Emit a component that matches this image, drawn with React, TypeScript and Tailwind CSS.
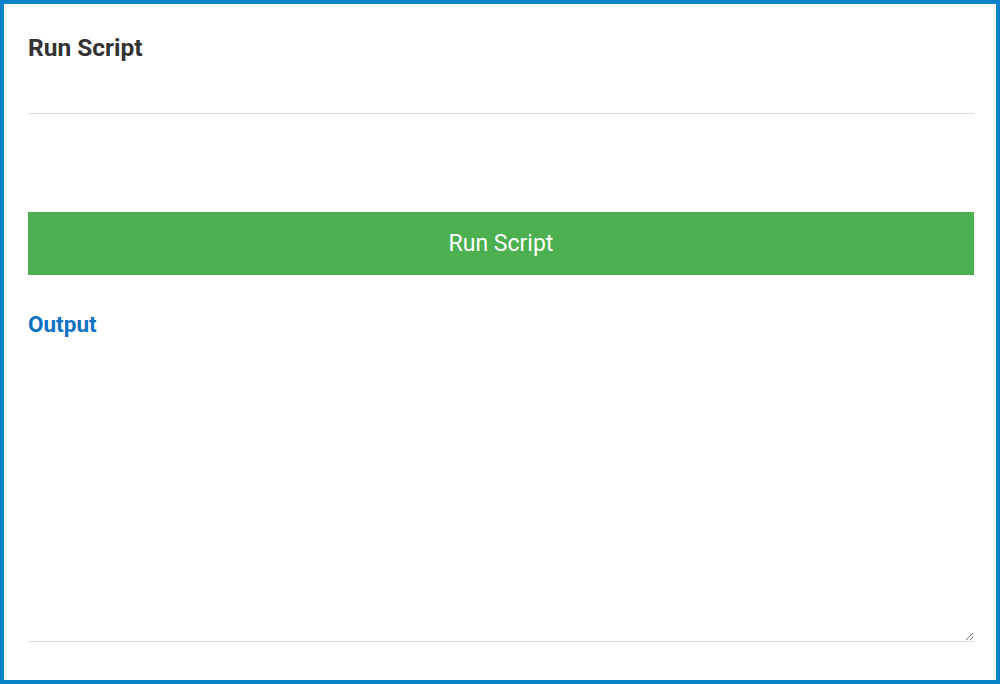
export default function App() {
  return (
    <div className="h-[684px] w-[1000px] border-4 border-[#0784c9] bg-white pl-6 pr-[22px] font-['Roboto',sans-serif]">
      {/* Header */}
      <div className="border-b border-[#dddddd] pt-[30px] pb-[51px]">
        <h1 className="text-[24.5px] leading-7 font-bold text-[#333333]">Run Script</h1>
      </div>

      {/* Run button */}
      <button className="mt-[98px] h-[63px] w-full bg-[#4caf50] pt-[2px] text-[23px] text-white">
        Run Script
      </button>

      {/* Output */}
      <h2 className="mt-[35px] text-[22.5px] leading-7 font-bold text-[#0f71c2]">Output</h2>
      <textarea
        className="mt-[2px] block h-[302px] w-full resize-y border-0 border-b border-[#dddddd] bg-white outline-none"
        readOnly
      />
    </div>
  )
}
